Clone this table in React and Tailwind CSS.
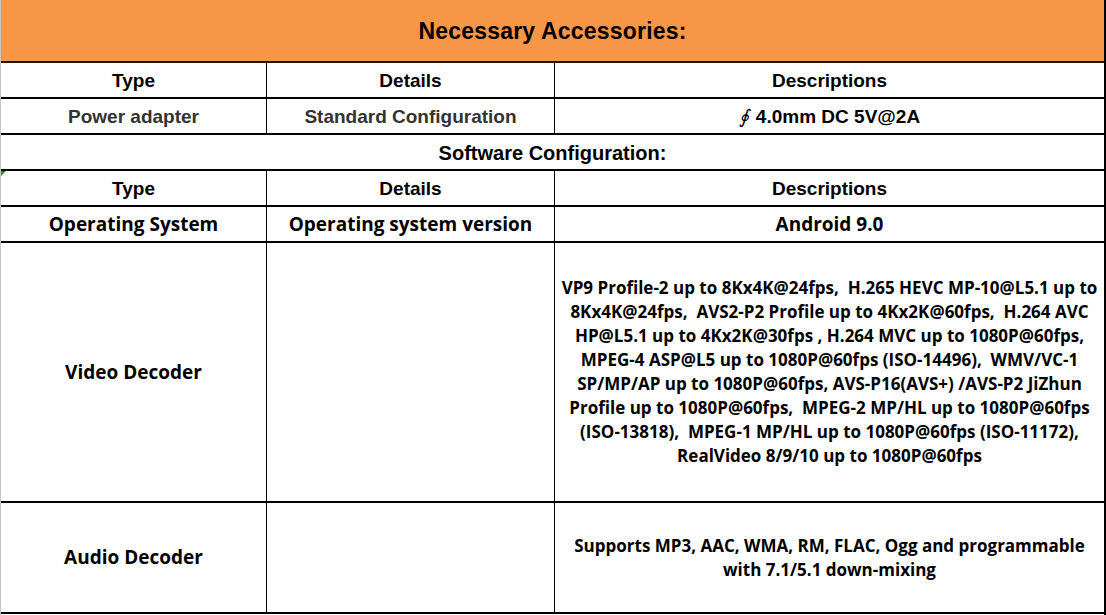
import React from 'react';

const videoLines = [
  'VP9 Profile-2 up to 8Kx4K@24fps,  H.265 HEVC MP-10@L5.1 up to',
  '8Kx4K@24fps,  AVS2-P2 Profile up to 4Kx2K@60fps,  H.264 AVC',
  'HP@L5.1 up to 4Kx2K@30fps , H.264 MVC up to 1080P@60fps,',
  'MPEG-4 ASP@L5 up to 1080P@60fps (ISO-14496),  WMV/VC-1',
  'SP/MP/AP up to 1080P@60fps, AVS-P16(AVS+) /AVS-P2 JiZhun',
  'Profile up to 1080P@60fps,  MPEG-2 MP/HL up to 1080P@60fps',
  '(ISO-13818),  MPEG-1 MP/HL up to 1080P@60fps (ISO-11172),',
  'RealVideo 8/9/10 up to 1080P@60fps',
];

const arial = "font-['Liberation_Sans',Arial,sans-serif] font-bold";
const yahei = "font-['Open_Sans','Noto_Sans',sans-serif] font-bold";

const Row = ({ h, children }) => (
  <div className={`flex shrink-0 border-b-2 border-black ${h}`}>{children}</div>
);

const Cell = ({ w, children, className = '', last }) => (
  <div
    className={`flex items-center justify-center text-center ${w || ''} ${last ? 'flex-1' : 'border-r border-black'} ${className}`}
  >
    {children}
  </div>
);

const App = () => {
  return (
    <div className="w-[1106px] h-[615px] bg-white flex flex-col border-l border-[#c4c4c4] border-r-2 border-r-black overflow-hidden text-black">
      {/* Necessary accessories */}
      <div className={`h-[63px] shrink-0 bg-[#f79646] border-b-2 border-[#1a1a1a] flex items-center justify-center pt-[2px] text-[23px] tracking-[0.2px] ${arial}`}>
        Necessary Accessories:
      </div>

      <Row h="h-[36px]">
        <Cell w="w-[266px]" className={`text-[19px] pt-[2px] ${arial}`}>Type</Cell>
        <Cell w="w-[288px]" className={`text-[19px] pt-[2px] ${arial}`}>Details</Cell>
        <Cell last className={`text-[19px] pt-[2px] ${arial}`}>Descriptions</Cell>
      </Row>

      <Row h="h-[36px]">
        <Cell w="w-[266px]" className={`text-[19px] pt-[2px] text-[#333333] ${arial}`}>Power adapter</Cell>
        <Cell w="w-[288px]" className={`text-[19px] pt-[2px] text-[#333333] ${arial}`}>Standard Configuration</Cell>
        <Cell last className={`text-[19px] pt-[2px] ${arial}`}>
          <span className="flex items-center">
            <span className="inline-block font-normal italic mr-[7px]">∮</span>
            <span>4.0mm DC 5V@2A</span>
          </span>
        </Cell>
      </Row>

      {/* Software configuration */}
      <Row h="h-[36px]">
        <Cell last className={`text-[20px] pt-[2px] ${arial}`}>Software Configuration:</Cell>
      </Row>

      <Row h="h-[36px]">
        <Cell w="w-[266px]" className={`relative text-[19px] pt-[2px] ${arial}`}>
          <svg className="absolute left-0 top-0" width="6" height="6" viewBox="0 0 6 6">
            <polygon points="0,0 5,0 0,5" fill="#1e8a3a" />
          </svg>
          Type
        </Cell>
        <Cell w="w-[288px]" className={`text-[19px] pt-[2px] ${arial}`}>Details</Cell>
        <Cell last className={`text-[19px] pt-[2px] ${arial}`}>Descriptions</Cell>
      </Row>

      <Row h="h-[36px]">
        <Cell w="w-[266px]" className={`text-[19px] ${yahei}`}>Operating System</Cell>
        <Cell w="w-[288px]" className={`text-[19px] ${yahei}`}>Operating system version</Cell>
        <Cell last className={`text-[19px] ${yahei}`}>Android 9.0</Cell>
      </Row>

      <Row h="h-[260px]">
        <Cell w="w-[266px]" className={`text-[19px] ${yahei}`}>Video Decoder</Cell>
        <Cell w="w-[288px]" />
        <Cell last>
          <div className={`text-[17px] leading-[24px] ${yahei}`}>
            {videoLines.map((line, i) => (
              <div key={i} className="whitespace-pre">{line}</div>
            ))}
          </div>
        </Cell>
      </Row>

      <Row h="h-[111px]">
        <Cell w="w-[266px]" className={`text-[19px] ${yahei}`}>Audio Decoder</Cell>
        <Cell w="w-[288px]" />
        <Cell last>
          <div className={`text-[17px] leading-[24px] ${yahei}`}>
            <div>Supports MP3, AAC, WMA, RM, FLAC, Ogg and programmable</div>
            <div>with 7.1/5.1 down-mixing</div>
          </div>
        </Cell>
      </Row>
    </div>
  );
};

export default App;
